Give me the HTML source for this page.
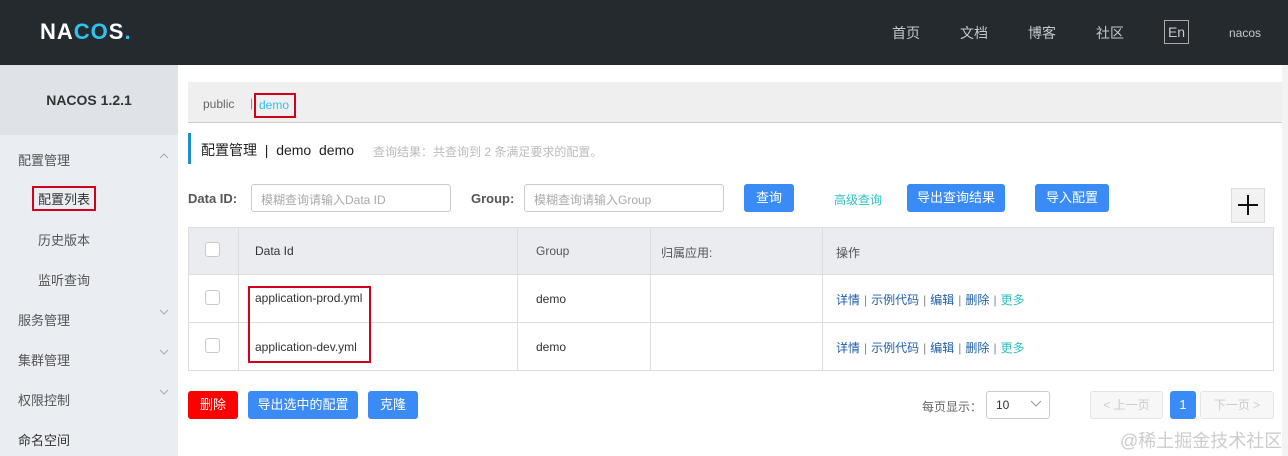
<!DOCTYPE html>
<html><head><meta charset="utf-8"><style>
*{box-sizing:border-box;margin:0;padding:0}
body{width:1288px;height:456px;overflow:hidden;font-family:"Liberation Sans","Noto Sans CJK SC",sans-serif;font-size:12px;color:#333;background:#fff;position:relative}
.a{position:absolute}
.hdr{left:0;top:0;width:1288px;height:65px;background:#252a2f}
.nav{color:#c5c8cc;font-size:14px;top:23px}
.side{left:0;top:65px;width:178px;height:391px;background:#eaedf1}
.si{left:18px;font-size:13px;color:#555}
.chev{left:158px;width:12px;height:12px}
.btn{background:#3a8bf5;color:#fff;border-radius:3px;text-align:center;font-size:13px}
.cb{width:15px;height:15px;border:1px solid #c9c9c9;border-radius:3px;background:#fff}
.vl{width:1px;background:#ddd}
.hl{height:1px;background:#ddd}
.ops{font-size:12px;color:#1f5fa8}
.ops span{color:#888;margin:0 4px}
.red{border:2px solid #d0021b}
</style></head><body>
<div class="a hdr"></div>
<div class="a" style="left:40px;top:19px;color:#fff;font-size:22px;font-weight:bold;letter-spacing:1px">NA<span style="color:#2ec2f0">CO</span>S<span style="color:#2ec2f0">.</span></div>
<div class="a nav" style="left:892px">首页</div>
<div class="a nav" style="left:960px">文档</div>
<div class="a nav" style="left:1028px">博客</div>
<div class="a nav" style="left:1096px">社区</div>
<div class="a" style="left:1164px;top:20px;width:25px;height:24px;border:1px solid #aaa;color:#c5c8cc;font-size:14px;text-align:center;line-height:22px">En</div>
<div class="a" style="left:1229px;top:26px;color:#c5c8cc;font-size:12px">nacos</div>

<div class="a side"></div>
<div class="a" style="left:0;top:65px;width:178px;height:70px;background:#dfe3e8"></div>
<div class="a" style="left:0;top:92px;width:178px;text-align:center;font-weight:bold;font-size:14px;color:#333">NACOS 1.2.1</div>
<div class="a si" style="top:150px">配置管理</div>
<svg class="a chev" style="top:150px" viewBox="0 0 12 12"><path d="M2 8L6 4L10 8" fill="none" stroke="#aaa"/></svg>
<div class="a si red" style="left:32px;top:186px;padding:1px 4px;color:#333">配置列表</div>
<div class="a si" style="left:38px;top:230px">历史版本</div>
<div class="a si" style="left:38px;top:270px">监听查询</div>
<div class="a si" style="top:310px">服务管理</div>
<svg class="a chev" style="top:306px" viewBox="0 0 12 12"><path d="M2 4L6 8L10 4" fill="none" stroke="#aaa"/></svg>
<div class="a si" style="top:350px">集群管理</div>
<svg class="a chev" style="top:346px" viewBox="0 0 12 12"><path d="M2 4L6 8L10 4" fill="none" stroke="#aaa"/></svg>
<div class="a si" style="top:390px">权限控制</div>
<svg class="a chev" style="top:386px" viewBox="0 0 12 12"><path d="M2 4L6 8L10 4" fill="none" stroke="#aaa"/></svg>
<div class="a si" style="top:430px;color:#333">命名空间</div>

<div class="a" style="left:1282px;top:65px;width:6px;height:391px;background:#f3f3f3"></div>
<div class="a" style="left:188px;top:82px;width:1094px;height:41px;background:#efefef;border-bottom:1px solid #ccc"></div>
<div class="a" style="left:203px;top:97px;color:#666">public</div>
<div class="a" style="left:250px;top:96px;color:#888">|</div>
<div class="a red" style="left:254px;top:93px;width:42px;height:25px;color:#2ec2f0;padding:3px 0 0 3px">demo</div>

<div class="a" style="left:188px;top:133px;width:3px;height:31px;background:#1f8fc9"></div>
<div class="a" style="left:201px;top:140px;font-size:14px;color:#222">配置管理 &nbsp;| &nbsp;demo &nbsp;demo</div>
<div class="a" style="left:373px;top:143px;font-size:12px;color:#bbb">查询结果：共查询到 2 条满足要求的配置。</div>

<div class="a" style="left:188px;top:191px;font-weight:bold;font-size:13px;color:#555">Data ID:</div>
<div class="a" style="left:251px;top:184px;width:200px;height:28px;border:1px solid #ccc;border-radius:3px;color:#aaa;padding:6px 9px">模糊查询请输入Data ID</div>
<div class="a" style="left:471px;top:191px;font-weight:bold;font-size:13px;color:#555">Group:</div>
<div class="a" style="left:524px;top:184px;width:200px;height:28px;border:1px solid #ccc;border-radius:3px;color:#aaa;padding:6px 9px">模糊查询请输入Group</div>
<div class="a btn" style="left:744px;top:184px;width:50px;height:28px;line-height:28px">查询</div>
<div class="a" style="left:834px;top:191px;color:#2ec2c2">高级查询</div>
<div class="a btn" style="left:907px;top:184px;width:98px;height:28px;line-height:28px">导出查询结果</div>
<div class="a btn" style="left:1035px;top:184px;width:74px;height:28px;line-height:28px">导入配置</div>
<div class="a" style="left:1231px;top:188px;width:34px;height:35px;background:#f2f2f2;border:1px solid #ddd"></div>
<svg class="a" style="left:1237px;top:194px" width="22" height="22"><path d="M11 1V21M1 11H21" stroke="#111" stroke-width="2"/></svg>

<div class="a" style="left:188px;top:227px;width:1086px;height:144px;border:1px solid #ddd"></div>
<div class="a" style="left:189px;top:228px;width:1084px;height:47px;background:#ebecf0;border-bottom:1px solid #ddd"></div>
<div class="a hl" style="left:189px;top:322px;width:1084px"></div>
<div class="a vl" style="left:238px;top:228px;height:142px"></div>
<div class="a vl" style="left:517px;top:228px;height:142px"></div>
<div class="a vl" style="left:650px;top:228px;height:142px"></div>
<div class="a vl" style="left:822px;top:228px;height:142px"></div>
<div class="a cb" style="left:205px;top:242px"></div>
<div class="a cb" style="left:205px;top:290px"></div>
<div class="a cb" style="left:205px;top:338px"></div>
<div class="a" style="left:255px;top:244px">Data Id</div>
<div class="a" style="left:536px;top:244px;color:#555">Group</div>
<div class="a" style="left:661px;top:244px;color:#555">归属应用:</div>
<div class="a" style="left:836px;top:244px;color:#555">操作</div>
<div class="a red" style="left:248px;top:286px;width:123px;height:77px"></div>
<div class="a" style="left:255px;top:291px">application-prod.yml</div>
<div class="a" style="left:255px;top:340px">application-dev.yml</div>
<div class="a" style="left:536px;top:292px">demo</div>
<div class="a" style="left:536px;top:340px">demo</div>
<div class="a ops" style="left:836px;top:291px">详情<span>|</span>示例代码<span>|</span>编辑<span>|</span>删除<span>|</span><b style="font-weight:normal;color:#2ec2c2">更多</b></div>
<div class="a ops" style="left:836px;top:339px">详情<span>|</span>示例代码<span>|</span>编辑<span>|</span>删除<span>|</span><b style="font-weight:normal;color:#2ec2c2">更多</b></div>

<div class="a btn" style="left:188px;top:391px;width:50px;height:28px;line-height:28px;background:#f00">删除</div>
<div class="a btn" style="left:248px;top:391px;width:110px;height:28px;line-height:28px">导出选中的配置</div>
<div class="a btn" style="left:368px;top:391px;width:50px;height:28px;line-height:28px">克隆</div>

<div class="a" style="left:922px;top:398px;color:#666">每页显示：</div>
<div class="a" style="left:986px;top:391px;width:64px;height:28px;border:1px solid #ccc;border-radius:3px;padding:6px 9px">10</div>
<svg class="a" style="left:1030px;top:399px" width="12" height="10"><path d="M1 2L6 7L11 2" fill="none" stroke="#999"/></svg>
<div class="a" style="left:1090px;top:391px;width:73px;height:28px;border:1px solid #e4e4e4;background:#f7f7f7;color:#ccc;border-radius:3px;text-align:center;line-height:26px">&lt; 上一页</div>
<div class="a btn" style="left:1170px;top:391px;width:26px;height:28px;line-height:28px">1</div>
<div class="a" style="left:1200px;top:391px;width:74px;height:28px;border:1px solid #e4e4e4;background:#f7f7f7;color:#ccc;border-radius:3px;text-align:center;line-height:26px">下一页 &gt;</div>
<div class="a" style="left:1120px;top:427px;font-size:18px;color:#ccc">@稀土掘金技术社区</div>
</body></html>
